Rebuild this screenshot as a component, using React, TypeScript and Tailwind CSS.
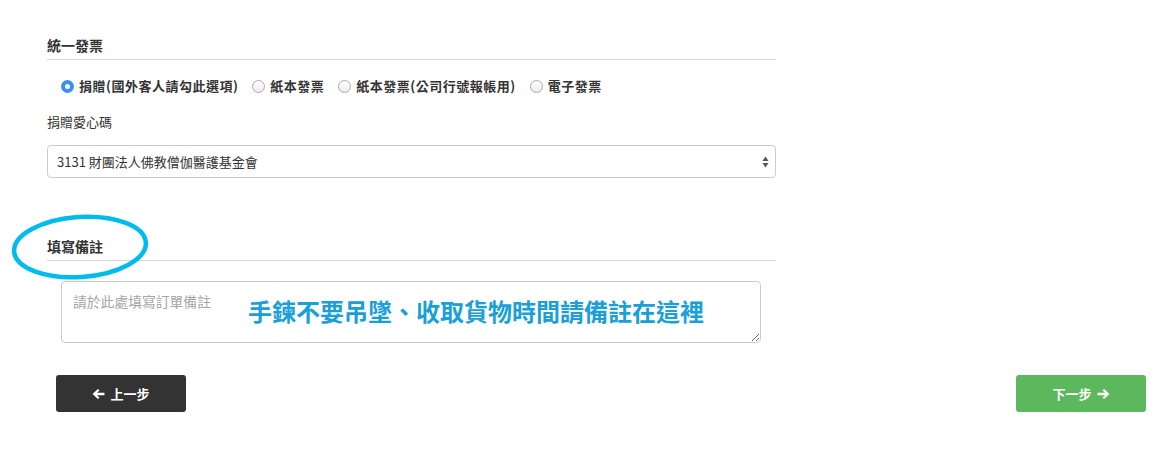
const font = { fontFamily: '"Noto Sans CJK TC", "Noto Sans", sans-serif' }

type RadioProps = { label: string; checked?: boolean }

const Radio = ({ label, checked }: RadioProps) => (
  <label className="flex items-center gap-[5px] mr-[14px]">
    {checked ? (
      <span className="w-[13px] h-[13px] rounded-full bg-[#3b8ff0] flex items-center justify-center shrink-0">
        <span className="w-[5px] h-[5px] rounded-full bg-white" />
      </span>
    ) : (
      <span className="w-[13px] h-[13px] rounded-full border border-[#aaa] bg-gradient-to-b from-white to-[#ececec] shrink-0" />
    )}
    <span>{label}</span>
  </label>
)

const Arrow = ({ dir }: { dir: 'left' | 'right' }) => (
  <svg width="13" height="12" viewBox="0 0 12 11" className={dir === 'right' ? 'rotate-180' : ''}>
    <path d="M0.5 5.5 L5.5 0.8 L6.9 2.2 L4.5 4.3 H11.5 V6.7 H4.5 L6.9 8.8 L5.5 10.2 Z" fill="white" />
  </svg>
)

const App = () => {
  return (
    <div className="w-[1173px] h-[451px] bg-white text-[#333] pt-[35px]" style={font}>
      <div className="pl-[47px]">
        {/* 統一發票 */}
        <div className="w-[729px]">
          <h3 className="text-[14px] font-semibold leading-[20px] pb-[4px] border-b border-[#d6d6d6]">統一發票</h3>

          <div className="mt-[16px] pl-[14px] flex items-center text-[13px] font-semibold leading-[20px] tracking-[0.5px]">
            <Radio label="捐贈(國外客人請勾此選項)" checked />
            <Radio label="紙本發票" />
            <Radio label="紙本發票(公司行號報帳用)" />
            <Radio label="電子發票" />
          </div>

          <p className="mt-[16px] text-[13px] leading-[20px]">捐贈愛心碼</p>

          <div className="mt-[13px] h-[33px] rounded-[4px] border border-[#ccc] flex items-center justify-between pl-[9px] pr-[6px] text-[13px]">
            <span>3131 財團法人佛教僧伽醫護基金會</span>
            <svg width="7" height="12" viewBox="0 0 7 12">
              <path d="M3.5 0.5 L6.5 5 H0.5 Z" fill="#555" />
              <path d="M3.5 11.5 L6.5 7 H0.5 Z" fill="#555" />
            </svg>
          </div>
        </div>

        {/* 填寫備註 */}
        <div className="w-[729px] mt-[58px] relative">
          <svg
            className="absolute left-[-36px] top-[-23px]"
            width="140"
            height="70"
            viewBox="0 0 140 70"
          >
            <ellipse
              cx="69"
              cy="34"
              rx="66"
              ry="30"
              transform="rotate(-4 69 34)"
              fill="none"
              stroke="#00bcec"
              strokeWidth="4.5"
            />
          </svg>
          <h3 className="text-[14px] font-semibold leading-[20px] pb-[4px] border-b border-[#d6d6d6]">填寫備註</h3>

          <div className="relative mt-[20px] ml-[14px] w-[700px] h-[62px]">
            <textarea
              className="w-full h-full rounded-[4px] border border-[#ccc] px-[11px] py-[9px] text-[13.8px] leading-[20px] placeholder:text-[#a5a5a5] outline-none"
              placeholder="請於此處填寫訂單備註"
            />
            <span className="absolute left-[187px] top-[17px] text-[24px] leading-[26px] font-bold text-[#1aa0d8] whitespace-nowrap pointer-events-none">
              手鍊不要吊墜、收取貨物時間請備註在這裡
            </span>
          </div>
        </div>
      </div>

      {/* 按鈕 */}
      <div className="mt-[32px] ml-[56px] mr-[27px] flex justify-between">
        <button className="w-[130px] h-[37px] rounded-[3px] bg-[#333] text-white text-[13px] font-bold flex items-center justify-center gap-[5px]">
          <Arrow dir="left" />
          上一步
        </button>
        <button className="w-[130px] h-[37px] rounded-[3px] bg-[#5cb85c] text-white text-[13px] font-bold flex items-center justify-center gap-[5px]">
          下一步
          <Arrow dir="right" />
        </button>
      </div>
    </div>
  )
}

export default App
